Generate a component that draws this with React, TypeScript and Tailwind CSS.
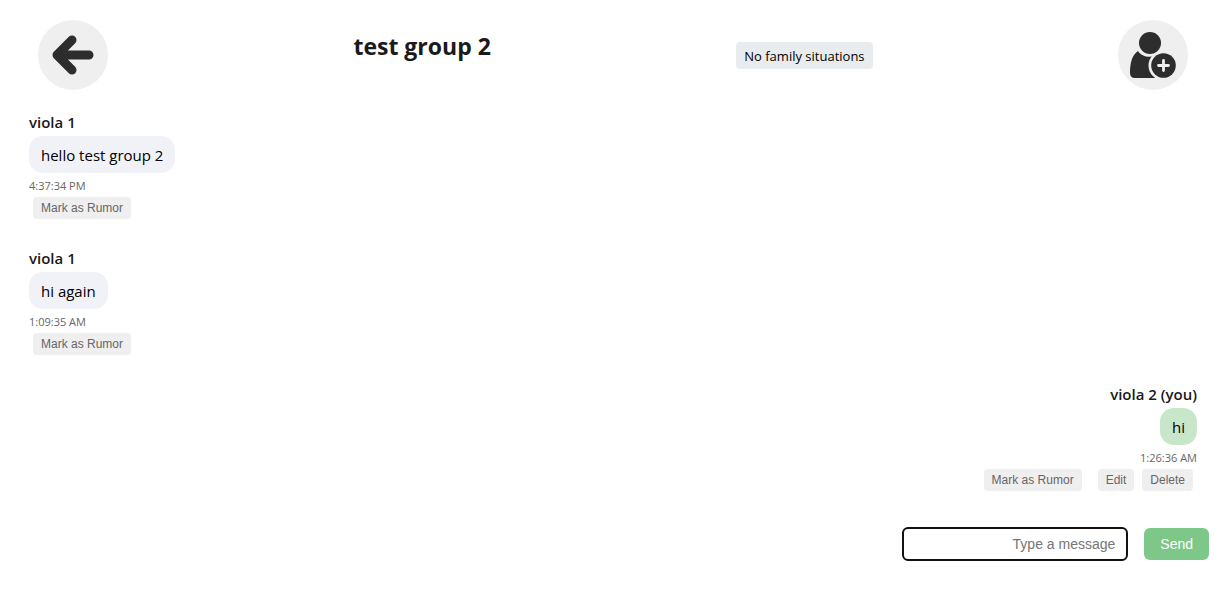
import { useState } from "react";

type Message = {
  id: number;
  author: string;
  text: string;
  time: string;
  own?: boolean;
};

const messages: Message[] = [
  { id: 1, author: "viola 1", text: "hello test group 2", time: "4:37:34 PM" },
  { id: 2, author: "viola 1", text: "hi again", time: "1:09:35 AM" },
  { id: 3, author: "viola 2 (you)", text: "hi", time: "1:26:36 AM", own: true },
];

function ActionButton({ label }: { label: string }) {
  return (
    <button
      type="button"
      className="mx-1 h-[22px] rounded bg-[#efefef] px-2 font-['Liberation_Sans',Arial,sans-serif] text-xs text-[#666]"
    >
      {label}
    </button>
  );
}

function MessageItem({ message }: { message: Message }) {
  const own = message.own;
  return (
    <li className={own ? "flex flex-col items-end" : "flex flex-col items-start"}>
      <span className="text-[15px] leading-5 font-semibold text-[#1a1a1a]">{message.author}</span>
      <p
        className={
          own
            ? "mt-1 rounded-[14px] bg-[#c8e6c9] px-3 pt-[9px] pb-[7px] text-[15px] leading-[21px] text-black"
            : "mt-1 rounded-[14px] bg-[#f0f2f7] px-3 pt-[9px] pb-[7px] text-[15px] leading-[21px] text-black"
        }
      >
        {message.text}
      </p>
      <time className="mt-[5px] text-[11px] leading-4 text-[#666]">{message.time}</time>
      <div className="mt-[3px] flex">
        <ActionButton label="Mark as Rumor" />
        {own && (
          <div className="ml-2 flex">
            <ActionButton label="Edit" />
            <ActionButton label="Delete" />
          </div>
        )}
      </div>
    </li>
  );
}

export default function App() {
  const [draft, setDraft] = useState("");

  return (
    <main className="bg-white font-['Open_Sans','Noto_Sans',sans-serif]">
      <header className="flex items-center justify-between pt-5 pr-[35px] pl-[38px]">
        <button
          type="button"
          aria-label="Back"
          className="flex size-[70px] items-center justify-center rounded-full bg-[#efefef]"
        >
          <svg viewBox="0 0 70 70" className="size-[70px]" aria-hidden="true">
            <path
              d="M34 20 L19 35 L34 50 M20 35 H51"
              fill="none"
              stroke="#2d2d2d"
              strokeWidth="9"
              strokeLinecap="round"
              strokeLinejoin="round"
            />
          </svg>
        </button>
        <h1 className="mb-[18px] text-[23px] leading-8 font-bold text-[#1a1a1a]">test group 2</h1>
        <p className="rounded bg-[#e9ecef] px-2 pt-[5px] pb-[3px] text-[13px] leading-[19px] text-black">
          No family situations
        </p>
        <button
          type="button"
          aria-label="Add member"
          className="flex size-[70px] items-center justify-center rounded-full bg-[#efefef]"
        >
          <svg viewBox="0 0 70 70" className="size-[70px]" aria-hidden="true">
            <path
              d="M20 31 C24 38 37 39 41 32 L45 36 V58 H17 Q12 58 12 53 C12 43 14 35 20 31Z"
              fill="#2d2d2d"
            />
            <circle cx="32" cy="23" r="13" fill="#efefef" />
            <circle cx="32" cy="23" r="11" fill="#2d2d2d" />
            <circle cx="45.5" cy="45.5" r="15" fill="#efefef" />
            <circle cx="45.5" cy="45.5" r="12.3" fill="#2d2d2d" />
            <path d="M45.5 40.5 V50.5 M40.5 45.5 H50.5" stroke="#efefef" strokeWidth="2.8" strokeLinecap="round" />
          </svg>
        </button>
      </header>

      <ul className="flex flex-col gap-[29px] pt-[22px] pr-[26px] pl-[29px]">
        {messages.map((message) => (
          <MessageItem key={message.id} message={message} />
        ))}
      </ul>

      <form
        className="mt-9 flex items-center justify-end gap-4 pr-[14px] font-['Liberation_Sans',Arial,sans-serif]"
        onSubmit={(event) => event.preventDefault()}
      >
        <input
          type="text"
          aria-label="Message"
          placeholder="Type a message"
          value={draft}
          onChange={(event) => setDraft(event.target.value)}
          className="h-[34px] w-[226px] rounded-md border-2 border-[#101010] bg-white px-[11px] text-right text-sm text-black outline-none placeholder:text-[#757575]"
        />
        <button type="submit" className="h-8 rounded-md bg-[#7dc888] px-4 text-sm text-white">
          Send
        </button>
      </form>
    </main>
  );
}
